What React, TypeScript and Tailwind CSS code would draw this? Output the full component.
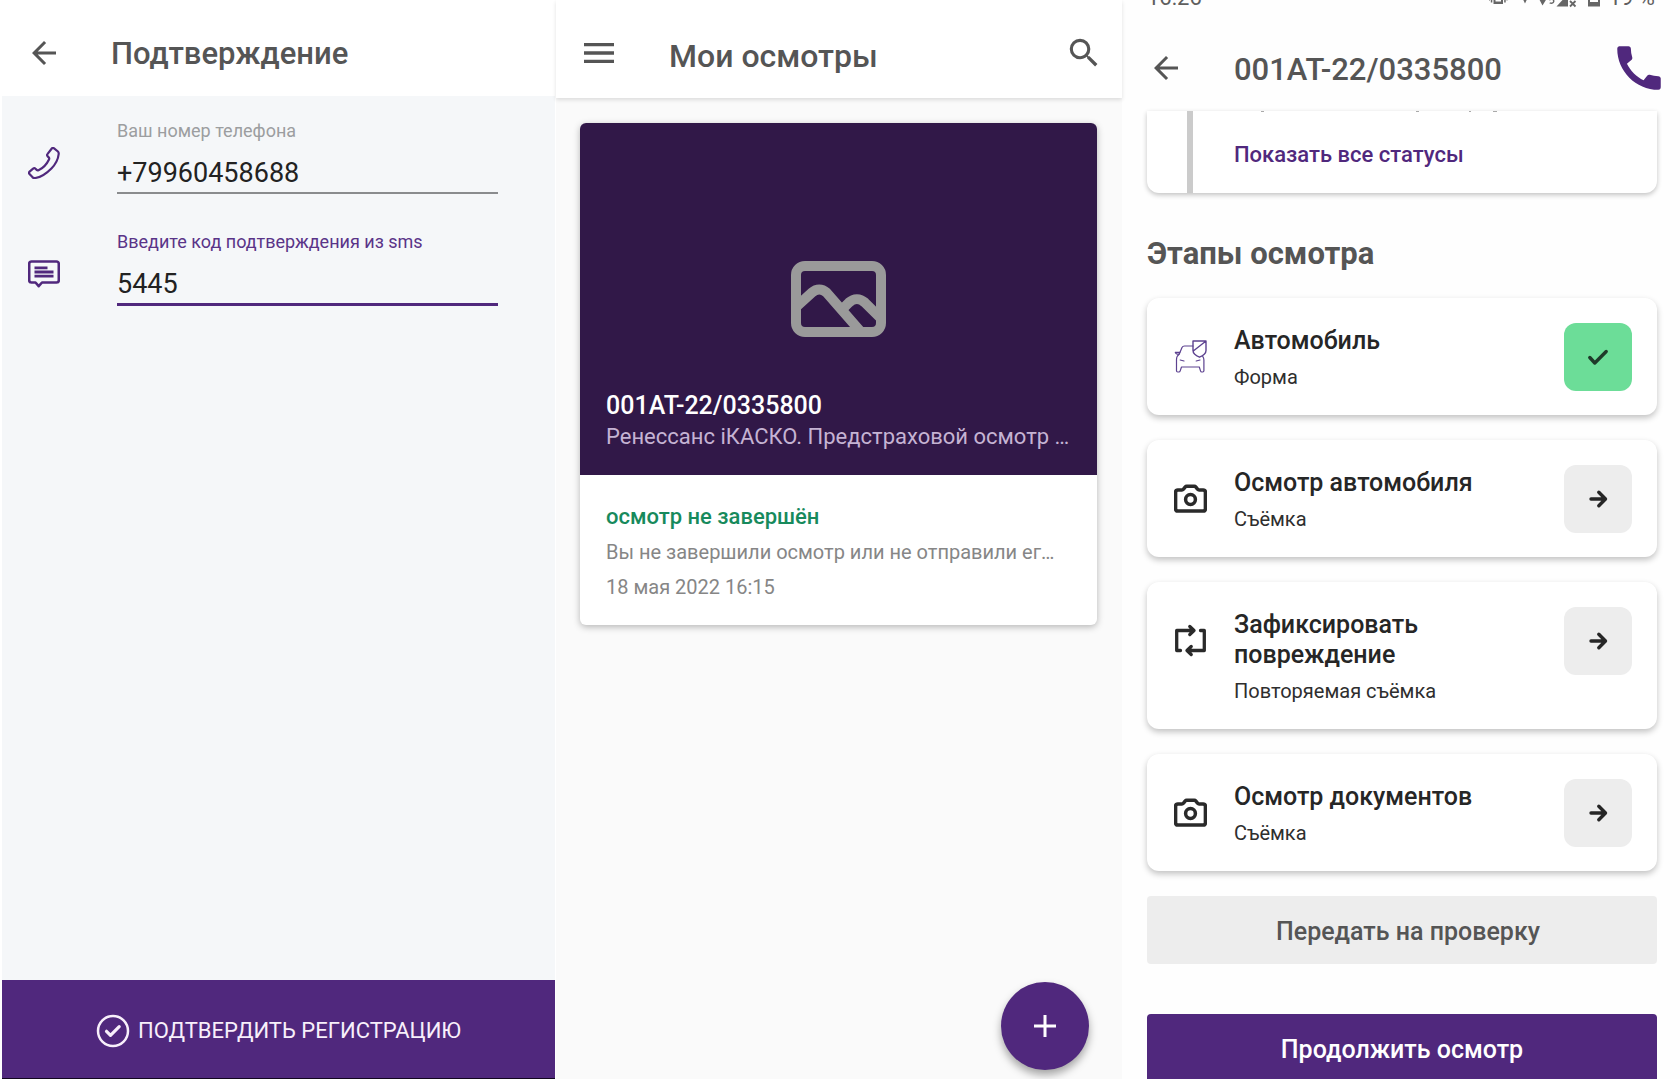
import React from 'react';
import { MdArrowBack, MdCall, MdMenu, MdSearch } from 'react-icons/md';

function PhoneOutlineIcon() {
  return (
    <svg viewBox="0 0 32 32" className="size-8 shrink-0" fill="none" stroke="#50287d" strokeWidth="2.200" strokeLinejoin="round" aria-hidden="true">
      <path d="M23.800 1.500c.7-.8 1.600-.8 2.300-.1l3.800 3.100c.7.7.9 1.500.8 2.500-.5 4.800-2.900 10-7.300 14.500C18.800 26.200 12.800 30.300 7.200 31c-1.200.2-2-.1-2.800-.9L1.500 27c-.7-.7-.7-1.600.1-2.300l3.500-3c.8-.7 1.700-.7 2.400 0l1.200 1.200c.5.5 1.100.6 1.800.3 4.700-2.200 8.200-6 10.500-10.800.4-.8.300-1.400-.3-2l-1-1c-.7-.7-.8-1.700-.1-2.500z" />
    </svg>
  );
}

function MessageIcon() {
  return (
    <svg viewBox="0 0 32 28" className="h-7 w-8 shrink-0" fill="none" stroke="#50287d" strokeWidth="2.600" strokeLinejoin="round" aria-hidden="true">
      <path d="M3.500 1.500h25a2.300 2.300 0 0 1 2.300 2.300v16.400a2.300 2.300 0 0 1-2.300 2.300H14l-3.300 3.700-3.200-3.700h-4a2.300 2.300 0 0 1-2.300-2.300V3.800a2.300 2.300 0 0 1 2.300-2.300z" />
      <path d="M6.500 7.800h13M6.500 12h19M6.500 16.200h19" strokeWidth="2.800" />
    </svg>
  );
}

function CheckCircleIcon() {
  return (
    <svg viewBox="0 0 34 34" className="size-[34px] shrink-0" fill="none" stroke="currentColor" strokeLinecap="round" strokeLinejoin="round" aria-hidden="true">
      <circle cx="17" cy="17" r="15" strokeWidth="2.500" />
      <path d="M10.500 17.300l4 4 8.700-8.700" strokeWidth="3.200" />
    </svg>
  );
}

function PictureIcon() {
  return (
    <svg viewBox="0 0 95 76" className="h-[76px] w-[95px]" fill="none" stroke="#9a9a9a" strokeWidth="10" aria-hidden="true">
      <rect x="5" y="5" width="85" height="66" rx="9" />
      <path d="M5 46L21 31.500c4.500-4 10-4 14.500 0L70 71" />
      <path d="M53 46.500l5-5c4.800-4.500 11-4.500 15.800 0L90 57.500" />
      <path d="M78.500 71c4 0 6.500-2.500 6.500-6.500V71z" fill="#9a9a9a" stroke="none" />
    </svg>
  );
}

function CarIcon() {
  return (
    <svg viewBox="0 0 33 33" className="size-[33px]" fill="none" stroke="#5d4290" strokeWidth="1.200" strokeLinejoin="round" strokeLinecap="round" aria-hidden="true">
      <path d="M19 6H10.500c-1.300 0-2 .5-2.500 1.600L5.300 14c-2 1.500-2.800 3-2.800 5.500v11.300c0 .8.400 1.200 1.200 1.200h1.100c.8 0 1.200-.4 1.400-1.100L7.500 27h17.800l1.200 3.900c.2.700.6 1.100 1.300 1.100h.9c.8 0 1.200-.4 1.200-1.200V20c0-1.500-.4-2.500-1.200-3.600" />
      <path d="M5.300 14c-1.800.5-3.500.2-4-1.700h4.500M6.200 20l3.800 1M26 20l-3.800 1" />
      <path d="M19 1h13v9.500c0 3.200-2.500 5-6.500 6.700-4-1.700-6.500-3.500-6.500-6.700zM19.300 11L31.700 1.300" strokeWidth="1.400" />
    </svg>
  );
}

function CameraIcon() {
  return (
    <svg viewBox="0 0 33 33" className="size-[33px]" fill="none" stroke="#2a2a2a" strokeWidth="3.500" strokeLinejoin="round" aria-hidden="true">
      <path d="M9.300 7.300l1.800-2.200c.4-.5.900-.8 1.600-.8h7.600c.7 0 1.200.3 1.600.8l1.800 2.200c.3.400.8.700 1.400.7h4.100c1.300 0 2.200.9 2.200 2.200v16.600c0 1.300-.9 2.200-2.200 2.200H3.800c-1.300 0-2.200-.9-2.200-2.200V10.200C1.600 8.900 2.500 8 3.800 8h4.100c.6 0 1.100-.3 1.400-.7z" />
      <circle cx="16.500" cy="17.500" r="4.900" />
    </svg>
  );
}

function RepeatIcon() {
  return (
    <svg viewBox="0 0 33 33" className="size-[33px]" fill="none" stroke="#2a2a2a" strokeWidth="3.300" strokeLinejoin="round" strokeLinecap="round" aria-hidden="true">
      <path d="M6.500 26.500H2.700v-20H20M15.800 2.500l4.200 4-4.200 4" />
      <path d="M26.500 6.500h3.800v20H13M17.200 22.500l-4.200 4 4.200 4" />
    </svg>
  );
}

function CheckIcon() {
  return (
    <svg viewBox="0 0 24 24" className="size-6" fill="none" stroke="#1f3a2a" strokeWidth="3.400" strokeLinejoin="round" strokeLinecap="round" aria-hidden="true">
      <path d="M3.800 12.500l5 5.500L20.200 6.500" />
    </svg>
  );
}

function ArrowIcon() {
  return (
    <svg viewBox="0 0 24 24" className="size-6" fill="none" stroke="#262626" strokeWidth="3.400" strokeLinejoin="round" strokeLinecap="round" aria-hidden="true">
      <path d="M5 12h14M12.800 5.200l6.700 6.800-6.700 6.800" />
    </svg>
  );
}

function StatusIcons() {
  return (
    <svg viewBox="0 0 112 24" className="h-6 w-28" fill="#666" aria-hidden="true">
      <path d="M4.500 7h9.500v11H4.500zM6.500 9v6.500H12V9z" fillRule="evenodd" />
      <path d="M1.800 9h1.500v7.500H1.800zM15.200 9h1.500v7.500h-1.500zM0 11h1v3.500H0zM17.500 11h1v3.500h-1z" />
      <path d="M31 7h10l-5 10.500zM48 9h12l-6.500 10.500z" />
      <path d="M61 11v2.600c2.800-1 4 .4 3.700 2-.3 1.500-2.300 2-4 1.200" fill="none" stroke="#666" strokeWidth="1.400" />
      <path d="M79 8v12.500H67.500z" />
      <path d="M81 15l5.500 5.500M86.500 15L81 20.500" stroke="#666" strokeWidth="1.800" />
      <path d="M99 4h12v16.500H99zM101 14v2h8v-2z" fillRule="evenodd" />
    </svg>
  );
}

type FieldProps = {
  id: string;
  label: string;
  value: string;
  active?: boolean;
  icon: React.ReactNode;
};

function Field({ id, label, value, active, icon }: FieldProps) {
  return (
    <div className="flex gap-[57px]">
      <div className="mt-7 flex h-8 shrink-0 items-center">{icon}</div>
      <div className="min-w-0 flex-1">
        <label htmlFor={id} className={active ? 'block text-[18px] leading-6 text-[#5a3488]' : 'block text-[18px] leading-6 text-[#9c9ea0]'}>
          {label}
        </label>
        <input
          id={id}
          defaultValue={value}
          className={
            active
              ? 'mt-[11px] block h-[41px] w-full border-b-[3px] border-[#50287d] bg-transparent text-[27px] leading-9 text-[#222] outline-none'
              : 'mt-[11px] block h-10 w-full border-b-2 border-[#8a8c8e] bg-transparent text-[27px] leading-9 text-[#222] outline-none'
          }
        />
      </div>
    </div>
  );
}

function ConfirmScreen() {
  return (
    <section className="flex min-w-0 flex-col">
      <header className="flex h-24 shrink-0 items-center gap-[49px] bg-white pt-2.5 pl-[26px]">
        <button type="button" aria-label="Назад" className="text-[#555]">
          <MdArrowBack size={36} />
        </button>
        <h1 className="pt-0.5 text-[31px] leading-9 font-medium text-[#555]">Подтверждение</h1>
      </header>
      <form className="mr-px ml-0.5 flex flex-1 flex-col bg-[#f5f7f9]">
        <div className="flex flex-1 flex-col gap-9 pt-[23px] pr-[57px] pl-[26px]">
          <Field id="phone" label="Ваш номер телефона" value="+79960458688" icon={<PhoneOutlineIcon />} />
          <Field id="code" label="Введите код подтверждения из sms" value="5445" active icon={<MessageIcon />} />
        </div>
        <button type="button" className="flex h-[99px] items-center justify-center gap-2 border-b border-[#12061f] bg-[#50287d] pt-[3px] text-[22px] leading-7 text-[#f8effb]">
          <CheckCircleIcon />
          <span>ПОДТВЕРДИТЬ РЕГИСТРАЦИЮ</span>
        </button>
      </form>
    </section>
  );
}

function InspectionsScreen() {
  return (
    <section className="relative flex min-w-0 flex-col bg-[#fafafa]">
      <header className="flex h-[98px] shrink-0 items-center bg-white pt-2 pr-[19px] pl-[23px] text-[#555] shadow-[0_2px_4px_rgba(0,0,0,0.12)]">
        <button type="button" aria-label="Меню">
          <MdMenu size={40} />
        </button>
        <h1 className="flex-1 pt-1.5 pl-[50px] text-[32px] leading-9 font-medium">Мои осмотры</h1>
        <button type="button" aria-label="Поиск">
          <MdSearch size={38} />
        </button>
      </header>
      <article className="mr-[25px] ml-6 mt-[25px] overflow-hidden rounded-md bg-white shadow-[0_2px_7px_rgba(0,0,0,0.28)]">
        <div className="bg-[#311848] px-[26px] pb-[23px]">
          <div className="flex justify-center pt-[138px] pb-[53px]">
            <PictureIcon />
          </div>
          <h2 className="text-[25px] leading-8 font-medium text-white">001AT-22/0335800</h2>
          <p className="text-[22px] leading-[30px] whitespace-nowrap text-[#c5b3d3]">Ренессанс iКАСКО. Предстраховой осмотр …</p>
        </div>
        <div className="px-[26px] pt-[26px] pb-[22px]">
          <p className="text-[22px] leading-8 font-medium text-[#178a5c]">осмотр не завершён</p>
          <p className="text-[20px] leading-[38px] whitespace-nowrap text-[#868686]">Вы не завершили осмотр или не отправили ег…</p>
          <p className="text-[20px] leading-8 text-[#868686]">18 мая 2022 16:15</p>
        </div>
      </article>
      <button
        type="button"
        aria-label="Добавить осмотр"
        className="absolute right-[33px] bottom-[9px] flex size-[88px] items-center justify-center rounded-full bg-[#50287d] text-white shadow-[0_5px_9px_rgba(0,0,0,0.35)]"
      >
        <svg viewBox="0 0 22 22" className="size-[22px]" fill="none" stroke="currentColor" strokeWidth="3" aria-hidden="true">
          <path d="M11 0v22M0 11h22" />
        </svg>
      </button>
    </section>
  );
}

type Step = {
  title: string;
  kind: string;
  icon: React.ReactNode;
  done?: boolean;
};

const steps: Step[] = [
  { title: 'Автомобиль', kind: 'Форма', icon: <CarIcon />, done: true },
  { title: 'Осмотр автомобиля', kind: 'Съёмка', icon: <CameraIcon /> },
  { title: 'Зафиксировать повреждение', kind: 'Повторяемая съёмка', icon: <RepeatIcon /> },
  { title: 'Осмотр документов', kind: 'Съёмка', icon: <CameraIcon /> },
];

function StepCard({ title, kind, icon, done }: Step) {
  return (
    <li className="flex items-start rounded-xl bg-white pr-[25px] pl-[27px] shadow-[0_3px_6px_rgba(0,0,0,0.24)]">
      <div className="flex h-[117px] w-[60px] shrink-0 items-center">{icon}</div>
      <div className="min-w-0 flex-1 pt-7 pb-[26px]">
        <h3 className="max-w-[250px] text-[25px] leading-[30px] font-medium text-[#262626]">{title}</h3>
        <p className="mt-[9px] text-[20px] leading-6 text-[#2e2e2e]">{kind}</p>
      </div>
      <div className="flex h-[117px] shrink-0 items-center">
        <button
          type="button"
          aria-label={done ? 'Выполнено' : 'Открыть'}
          className={
            done
              ? 'flex size-[68px] items-center justify-center rounded-xl bg-[#6cdd98]'
              : 'flex size-[68px] items-center justify-center rounded-xl bg-[#ededed]'
          }
        >
          {done ? <CheckIcon /> : <ArrowIcon />}
        </button>
      </div>
    </li>
  );
}

function StagesScreen() {
  return (
    <section className="flex min-w-0 flex-col bg-[#fefefe]">
      <div className="h-6 shrink-0 overflow-hidden text-[22px] leading-6 text-[#5f5f5f]">
        <div className="-mt-3.5 flex items-center pr-[25px] pl-[25px]">
          <span className="flex-1">16:26</span>
          <StatusIcons />
          <span className="pl-2">19 %</span>
        </div>
      </div>
      <header className="flex h-[87px] shrink-0 items-center bg-[#fefefe] pr-3 pl-[26px] text-[#555]">
        <button type="button" aria-label="Назад">
          <MdArrowBack size={36} />
        </button>
        <h1 className="flex-1 pt-1 pl-[50px] text-[31px] leading-9 font-medium">001AT-22/0335800</h1>
        <button type="button" aria-label="Позвонить" className="text-[#50287d]">
          <MdCall size={58} />
        </button>
      </header>
      <div className="pr-[23px] pl-[25px]">
        <div className="flex h-[82px] rounded-b-xl bg-white pl-10 shadow-[0_2px_5px_rgba(0,0,0,0.24)]">
          <div className="w-1.5 bg-[#cbcbcb]" />
          <div className="pl-[41px]">
            <svg viewBox="0 0 270 2" className="h-0.5 w-[270px]" fill="#aaa" aria-hidden="true">
              <path d="M27 0h3v1h-3zM182 0h3v1h-3zM235 0h2v1h-2zM259 0h4v1h-4z" />
            </svg>
            <a href="#statuses" className="mt-7 block text-[22px] leading-7 font-medium text-[#50287d]">
              Показать все статусы
            </a>
          </div>
        </div>
        <h2 className="mt-[43px] text-[31px] leading-9 font-bold text-[#555]">Этапы осмотра</h2>
        <ul className="mt-[26px] flex flex-col gap-[25px]">
          {steps.map((step) => (
            <StepCard key={step.title} {...step} />
          ))}
        </ul>
        <button type="button" className="mt-[25px] block h-[68px] w-full rounded bg-[#ededed] pt-1 pl-3 text-[25px] leading-8 font-medium text-[#555]">
          Передать на проверку
        </button>
        <button type="button" className="mt-[50px] block h-[68px] w-full rounded bg-[#50287d] pt-1 text-[25px] leading-8 font-medium text-white">
          Продолжить осмотр
        </button>
      </div>
    </section>
  );
}

export default function App() {
  return (
    <main className="grid h-screen grid-cols-[556fr_566fr_558fr] grid-rows-[100vh] overflow-hidden bg-white font-['Roboto',sans-serif]">
      <ConfirmScreen />
      <InspectionsScreen />
      <StagesScreen />
    </main>
  );
}
